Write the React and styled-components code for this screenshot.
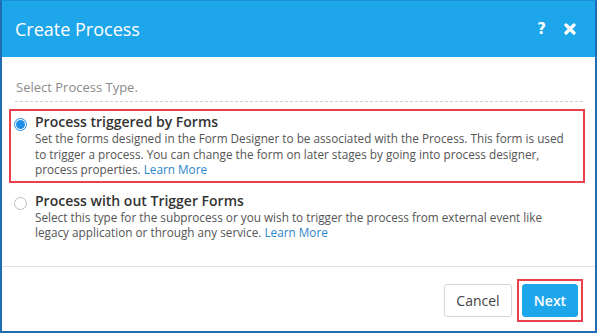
import React from "react";
import styled, { createGlobalStyle } from "styled-components";

const Global = createGlobalStyle`
  html, body { margin: 0; padding: 0; background: #fff; }
  body { font-family: "Open Sans", "Noto Sans", Arial, sans-serif; }
  * { box-sizing: border-box; }
`;

const Dialog = styled.div`
  width: 597px;
  height: 333px;
  border: 2px solid #1f6cb3;
  border-top: 1px solid #1a8fd6;
  display: flex;
  flex-direction: column;
  background: #fff;
`;

const Header = styled.div`
  height: 56px;
  flex: none;
  background: #1ea6ea;
  display: flex;
  align-items: center;
  padding: 0 19px 0 12px;
  color: #fff;
`;

const Title = styled.h1`
  margin: 0;
  flex: 1;
  font-size: 18px;
  font-weight: 400;
  padding-left: 1px;
`;

const HeaderIcons = styled.div`
  display: flex;
  align-items: center;
  gap: 18px;
`;

const HelpIcon = styled.span`
  font-family: "DejaVu Sans", sans-serif;
  font-weight: 700;
  font-size: 15px;
  line-height: 1;
`;

const Body = styled.div`
  flex: 1;
  padding: 21px 12px 0 13px;
`;

const SectionLabel = styled.div`
  font-size: 13px;
  color: #8c8c8c;
  line-height: 18px;
  padding: 0 0 5px 1px;
  border-bottom: 1px dashed #cfcfcf;
`;

const Options = styled.div`
  display: flex;
  flex-direction: column;
  gap: 5px;
  margin: 7px -2px 0 -6px;
`;

const Option = styled.label`
  display: grid;
  grid-template-columns: 18px 1fr;
  column-gap: 3px;
  padding: 2px 0 3px 3px;
  border: 2px solid ${(p) => (p.$selected ? "#e8414b" : "transparent")};
  cursor: pointer;
`;

const Radio = styled.span`
  width: 13px;
  height: 13px;
  margin-top: 5px;
  border-radius: 50%;
  border: 1px solid ${(p) => (p.$checked ? "#1e8fe6" : "#bdbdbd")};
  background: #fff;
  display: flex;
  align-items: center;
  justify-content: center;
  &::after {
    content: "";
    width: 9px;
    height: 9px;
    border-radius: 50%;
    background: ${(p) => (p.$checked ? "#1e8fe6" : "transparent")};
  }
`;

const OptionText = styled.div`
  display: flex;
  flex-direction: column;
`;

const OptionTitle = styled.div`
  font-size: 14px;
  font-weight: 600;
  color: #333;
  line-height: 18px;
`;

const OptionDesc = styled.div`
  font-size: 11.75px;
  color: #555;
  line-height: 15.6px;
  white-space: nowrap;
`;

const Link = styled.a`
  color: #2e86c9;
  text-decoration: none;
`;

const Footer = styled.div`
  height: 65px;
  flex: none;
  border-top: 1px solid #e3e3e3;
  display: flex;
  justify-content: flex-end;
  align-items: flex-start;
  gap: 5px;
  padding: 12px 12px 0 0;
`;

const Button = styled.button`
  height: 33px;
  padding: 0;
  width: ${(p) => (p.$primary ? "56px" : "68px")};
  border-radius: 3px;
  font-family: inherit;
  font-size: 14px;
  font-weight: ${(p) => (p.$primary ? 600 : 400)};
  color: ${(p) => (p.$primary ? "#fff" : "#444")};
  background: ${(p) => (p.$primary ? "#1ea6ea" : "#fff")};
  border: 1px solid ${(p) => (p.$primary ? "#1ea6ea" : "#d6d6d6")};
  margin-top: ${(p) => (p.$primary ? "0" : "5px")};
  cursor: pointer;
`;

const Highlight = styled.div`
  border: 2px solid #e8414b;
  padding: 3px;
  display: flex;
`;

function CloseIcon() {
  return (
    <svg width="12" height="12" viewBox="0 0 12 12" aria-hidden="true">
      <path d="M2 2 L10 10 M10 2 L2 10" stroke="#fff" strokeWidth="3.2" strokeLinecap="round" />
    </svg>
  );
}

export default function App() {
  return (
    <>
      <Global />
      <Dialog>
        <Header>
          <Title>Create Process</Title>
          <HeaderIcons>
            <HelpIcon>?</HelpIcon>
            <CloseIcon />
          </HeaderIcons>
        </Header>
        <Body>
          <SectionLabel>Select Process Type.</SectionLabel>
          <Options>
            <Option $selected>
              <Radio $checked />
              <OptionText>
                <OptionTitle>Process triggered by Forms</OptionTitle>
                <OptionDesc>
                  Set the forms designed in the Form Designer to be associated with the Process. This form is used
                  <br />
                  to trigger a process. You can change the form on later stages by going into process designer,
                  <br />
                  process properties. <Link href="#">Learn More</Link>
                </OptionDesc>
              </OptionText>
            </Option>
            <Option>
              <Radio />
              <OptionText>
                <OptionTitle>Process with out Trigger Forms</OptionTitle>
                <OptionDesc>
                  Select this type for the subprocess or you wish to trigger the process from external event like
                  <br />
                  legacy application or through any service. <Link href="#">Learn More</Link>
                </OptionDesc>
              </OptionText>
            </Option>
          </Options>
        </Body>
        <Footer>
          <Button>Cancel</Button>
          <Highlight>
            <Button $primary>Next</Button>
          </Highlight>
        </Footer>
      </Dialog>
    </>
  );
}
